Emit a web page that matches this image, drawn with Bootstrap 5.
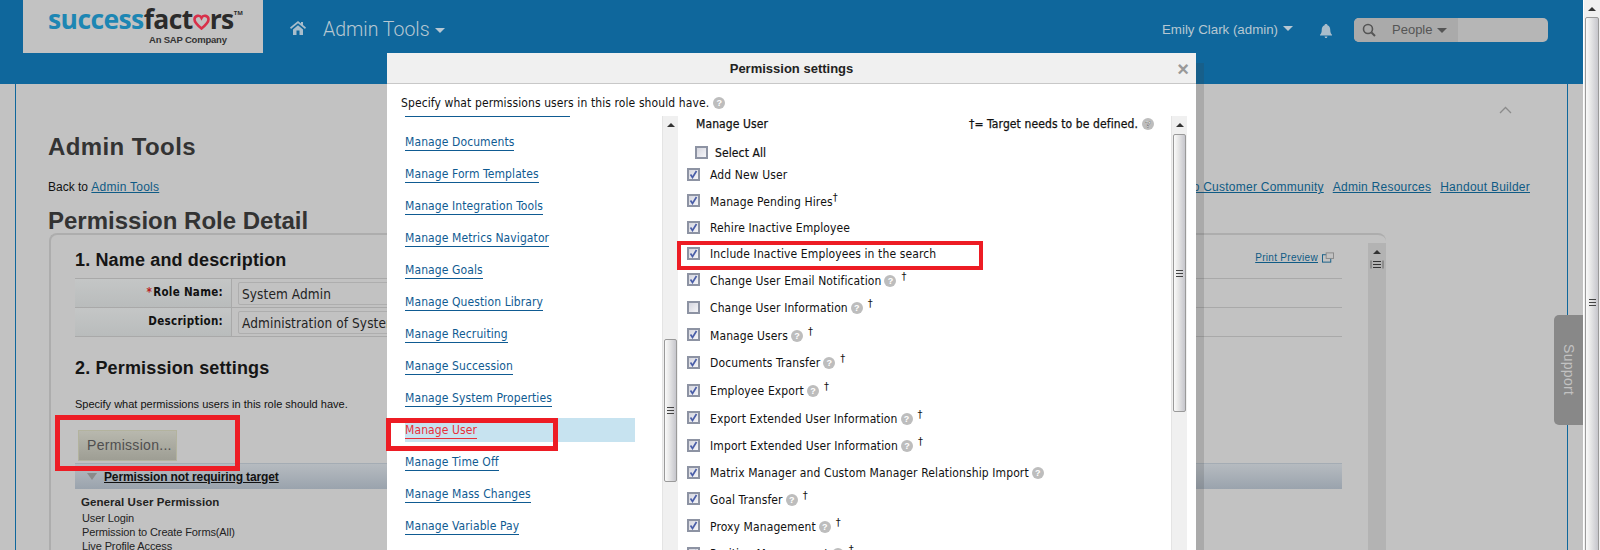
<!DOCTYPE html>
<html lang="en">
<head>
<meta charset="utf-8">
<title>Permission settings</title>
<link href="https://cdn.jsdelivr.net/npm/bootstrap@5.3.0/dist/css/bootstrap.min.css" rel="stylesheet">
<style>
html,body{height:550px;overflow:hidden;background:#c2c2c2;}
body{font-family:"Liberation Sans",Arial,sans-serif;font-size:12px;color:#111;position:relative;}
.shell{height:550px;}
.mainarea{width:1583px;height:550px;overflow:hidden;}
.topbar{height:84px;background:#0f679c;color:#b7c7d2;}
.logobox{width:240px;height:53px;margin-left:23px;background:#c2c2c2;padding:7px 0 0 25px;}
.logotxt{font-family:"Open Sans","Liberation Sans",sans-serif;font-weight:700;font-size:26.5px;line-height:24px;letter-spacing:-.6px;color:#2b2b2b;white-space:nowrap;}
.logotxt b{color:#1d86b3;font-weight:700;}
.logotxt svg{margin:0 0 -1px 0;}
.logotxt sup{font-size:6px;top:-14px;letter-spacing:0;vertical-align:baseline;position:relative;}
.logosub{font-size:9.5px;font-weight:700;letter-spacing:-.2px;line-height:10px;color:#333;margin:4px 0 0 101px;white-space:nowrap;}
.homeic{margin:21px 0 0 27px;}
.admtitle{font-family:"Roboto","Liberation Sans",sans-serif;font-weight:300;font-size:19.5px;line-height:24px;margin:18px 0 0 17px;white-space:nowrap;}
.careti{display:inline-block;border:5px solid transparent;border-top:5px solid #b7c7d2;border-bottom:0;margin-left:5px;vertical-align:3px;}
.usertxt{font-size:13.3px;line-height:20px;margin:20px 0 0 auto;white-space:nowrap;}
.bellic{margin:24px 0 0 26px;}
.searchwrap{width:194px;height:24px;margin:18px 35px 0 21px;background:#b6b6b6;border-radius:5px;overflow:hidden;}
.searchleft{width:104px;background:#aaa;color:#555;font-size:13px;}
.contentwrap{width:1553px;height:466px;margin-left:15px;border:solid #0f679c;border-width:0 1px;padding:0 0 0 32px;position:relative;}
.chevrow{height:41px;padding:22px 55px 0 0;}
.pagetitle{font-size:24px;font-weight:700;line-height:28px;letter-spacing:.4px;color:#333;margin:0;padding-top:8px;height:36px;}
.backrow{height:20px;margin-top:16px;line-height:20px;width:1482px;}
.backrow a{color:#0f5b85;letter-spacing:.25px;}
.backgap{gap:9px;}
.roletitle{font-size:24px;font-weight:700;line-height:28px;letter-spacing:0;color:#333;margin:10px 0 0;height:26px;}
.rolecard{width:1337px;height:317px;margin:0 0 0 1px;border:solid #adadad;border-width:2px 0 0 2px;border-radius:8px 8px 0 0;overflow:hidden;}
.cardinner{width:1317px;padding-left:24px;}
.cardbar{width:18px;background:#b3b3b3;height:330px;margin-top:8px;}
.secrow{margin-top:14px;}
.sec-h{font-size:18px;line-height:22px;font-weight:700;color:#151515;margin:0;letter-spacing:.15px;white-space:nowrap;}
.printwrap{margin:0 34px 6px 0;}
.printlk{font-size:10px;letter-spacing:.3px;color:#0f5b85;}
.formgrid{width:1267px;margin-top:7px;border-top:1px solid #a9a9a9;}
.formrow{height:29px;border-bottom:1px solid #a9a9a9;}
.formlab{width:157px;border-right:1px solid #a9a9a9;background:linear-gradient(#c4c6c6,#b9bcbc);font:700 11.5px/26px "DejaVu Sans Condensed","Noto Sans",sans-serif;text-align:right;padding-right:8px;letter-spacing:.3px;}
.formlab i{color:#b22;font-style:normal;margin-right:1px;}
.formval{padding:3px 0 0 6px;flex:1;}
.faux-inp{height:23px;width:900px;border:1px solid #aeaeae;border-radius:2px;font:13.5px/22px "DejaVu Sans Condensed","Noto Sans",sans-serif;padding-left:3px;letter-spacing:.1px;color:#222;white-space:nowrap;}
.sec-two{margin-top:20px;}
.spectxt{font-size:11px;line-height:16px;margin-top:17px;}
.permbtn{width:99px;height:31px;margin:18px 0 0 3px;border:1px solid #b3b39e;background:linear-gradient(#b8b8ae,#9e9e94);color:#4f4f4f;font-size:14px;line-height:29px;letter-spacing:.3px;border-radius:0;padding:0 0 0 8px;text-align:left;}
.permbar{width:1267px;height:26px;margin-top:2px;background:linear-gradient(#b6bbc0,#9aa3ad);border-top:1px solid #a4acb4;padding-left:11px;font-weight:700;font-size:12px;color:#111;}
.permbar u{margin-left:6px;letter-spacing:-.13px;}
.genhead{font-weight:700;font-size:11.5px;letter-spacing:.07px;margin:6px 0 0 6px;line-height:14px;color:#222;}
.genlist{margin:2px 0 0 7px;line-height:14px;font-size:11px;letter-spacing:-.12px;color:#222;}
.supporttab{position:absolute;right:-16px;top:231px;width:29px;height:110px;background:#888;color:#c2c2c2;border-radius:5px 0 0 5px;writing-mode:vertical-rl;font-size:14px;text-align:center;line-height:29px;letter-spacing:.3px;}
.modalbox{position:absolute;left:387px;top:53px;width:809px;height:497px;background:#fff;box-shadow:8px 10px 0 rgba(60,60,60,.18);font-family:"DejaVu Sans Condensed","Noto Sans",sans-serif;color:#111;}
.modalhead{height:31px;background:#f0f0f0;border-bottom:1px solid #c8c8c8;font:700 13px/32px "Liberation Sans",sans-serif;color:#222;position:relative;}
.modalx{position:absolute;right:7px;top:1px;font:700 20px/30px "Liberation Sans",sans-serif;color:#999;}
.intro{height:32px;padding:11px 0 0 14px;font-size:12px;letter-spacing:.1px;line-height:16px;}
.hq{display:inline-block;width:12px;height:12px;border-radius:50%;background:#bdbdbd;color:#fff;font:700 9px/12px "Liberation Sans",sans-serif;text-align:center;margin-left:4px;vertical-align:1px;letter-spacing:0;}
.panes{height:434px;overflow:hidden;}
.leftpane{width:275px;overflow:hidden;padding-left:18px;}
.navclip{width:165px;height:10px;border-top:1px solid #0f5b92;}
.navitem{height:32px;line-height:32px;}
.navitem a{display:inline-block;line-height:15px;color:#0f5b92;border-bottom:1px solid #0f5b92;text-decoration:none;font-size:12px;white-space:nowrap;letter-spacing:.1px;}
.navitem.cur{background:#c7e3f0;height:24px;margin:4px 0;line-height:24px;width:230px;}
.navitem.cur a{color:#e8303a;border-color:#e8303a;}
.sbtrack{width:16px;background:#f0f0f0;border-left:1px solid #e4e4e4;flex:none;}
.sbup{height:17px;text-align:center;padding-top:7px;}
.sbup i{display:block;width:0;margin:0 auto;border:4px solid transparent;border-bottom:4px solid #333;border-top:0;}
.sbthumb{margin:0 1px;border:1px solid #9a9a9a;border-radius:2px;background:linear-gradient(90deg,#fafafa,#e9e9e9 35%,#c6c6cc);}
.thumbleft{height:143px;margin-top:206px;}
.thumbright{height:278px;margin-top:1px;}
.grip{width:7px;height:7px;background:repeating-linear-gradient(#444 0 1px,transparent 1px 3px);}
.rightpane{width:493px;padding-left:9px;font-size:12px;letter-spacing:.11px;}
.paneh{height:16px;line-height:16px;font-weight:400;-webkit-text-stroke:.25px #111;padding:0 0 0 9px;width:467px;}
.selrow{height:17px;margin-top:12px;padding-left:8px;}
.selrow label{margin-left:7px;-webkit-text-stroke:.2px #111;}
.permrow{white-space:nowrap;}
.permrow label{margin-left:10px;line-height:16px;padding-top:2px;}
.permrow .hq{margin-left:3px;}
.r26{height:26px}.r27{height:27px}.r28{height:28px}
.dg{font-size:11px;margin-left:5px;vertical-align:5px;line-height:0;}
.dg0{margin-left:0;}
.chk{appearance:none;-webkit-appearance:none;display:block;width:13px;height:13px;margin:0;border:2px solid #8d93a3;background:linear-gradient(135deg,#d5d6df,#f5f5f8);flex:none;}
.chk:checked{background:url("data:image/svg+xml,%3Csvg xmlns='http://www.w3.org/2000/svg' viewBox='0 0 9 9'%3E%3Cpath d='M1.5 4.5 3.5 7.5 7.5 1' fill='none' stroke='%234a5ea8' stroke-width='1.7'/%3E%3C/svg%3E") center/9px 9px no-repeat,linear-gradient(135deg,#d5d6df,#f5f5f8);}
.pagebar{width:17px;height:550px;background:#f0f0f0;border-left:1px solid #fff;overflow:hidden;}
.pagethumb{height:590px;}
.pagegrip{margin-top:281px;}
.rbox{position:absolute;border:5px solid #ed1c24;pointer-events:none;}
.rbox1{left:55px;top:415px;width:185px;height:56px;}
.rbox2{left:386px;top:418px;width:172px;height:33px;}
.rbox3{left:677px;top:241px;width:306px;height:29px;border-width:4px;}
</style>
</head>
<body>
<div class="shell d-flex">
  <div class="mainarea">
    <header class="topbar d-flex">
      <div class="logobox">
        <div class="logotxt"><b>success</b>fact<svg width="17" height="16" viewBox="0 0 17 16"><path d="M8.500 14.500C3 10 1.500 8 1.500 5.500A3.700 3.700 0 0 1 8.500 3.800 3.700 3.700 0 0 1 15.500 5.500C15.500 8 14 10 8.500 14.500Z" fill="none" stroke="#d8304a" stroke-width="2.600"/></svg>rs<sup>TM</sup></div>
        <div class="logosub">An SAP Company</div>
      </div>
      <svg class="homeic" width="16" height="14" viewBox="0 0 16 14"><path d="M8 0 0 6.500 1 8 8 2.300 15 8 16 6.500 13 4V1h-2v1.400ZM3 8.500V14h3.500V9.500h3V14H13V8.500L8 4.300Z" fill="#a9bdcb"/></svg>
      <div class="admtitle">Admin Tools<span class="careti"></span></div>
      <div class="usertxt">Emily Clark (admin)<span class="careti"></span></div>
      <svg class="bellic" width="14" height="14" viewBox="0 0 14 14"><path d="M7 0C8 0 8.500.6 8.500 1.300 10.700 2 11.300 4 11.300 6.500c0 2 .7 3.200 1.700 4.200V11.500H1v-.8C2 9.700 2.700 8.500 2.700 6.500 2.700 4 3.300 2 5.500 1.300 5.500.6 6 0 7 0ZM5.500 12.500h3L7.800 14H6.200Z" fill="#a9bdcb"/></svg>
      <div class="searchwrap d-flex">
        <div class="searchleft d-flex align-items-center">
          <svg class="ms-2" width="14" height="14" viewBox="0 0 14 14"><circle cx="6" cy="6" r="4.500" fill="none" stroke="#555" stroke-width="1.600"/><path d="M9.500 9.500 13 13" stroke="#555" stroke-width="2"/></svg>
          <span class="ms-3">People</span><span class="careti" style="border-top-color:#555"></span>
        </div>
      </div>
    </header>
    <main class="contentwrap">
      <div class="chevrow d-flex justify-content-end">
        <svg width="13" height="8" viewBox="0 0 13 8"><path d="M1 7 6.500 1.500 12 7" fill="none" stroke="#8b8b8b" stroke-width="1.300"/></svg>
      </div>
      <h1 class="pagetitle">Admin Tools</h1>
      <div class="backrow d-flex justify-content-between">
        <div>Back to <a href="#">Admin Tools</a></div>
        <div class="d-flex backgap"><a href="#">Go to Customer Community</a><a href="#">Admin Resources</a><a href="#">Handout Builder</a></div>
      </div>
      <h2 class="roletitle">Permission Role Detail</h2>
      <div class="rolecard d-flex">
        <div class="cardinner">
          <div class="d-flex align-items-center justify-content-between secrow">
            <h3 class="sec-h">1. Name and description</h3>
            <div class="d-flex align-items-center printwrap"><a href="#" class="printlk">Print Preview</a>
              <svg class="ms-1" width="12" height="11" viewBox="0 0 13 11"><rect x=".5" y="2.500" width="9" height="8" fill="none" stroke="#0f5b85"/><rect x="4.500" y=".5" width="8" height="6" fill="#c2c2c2" stroke="#888"/></svg>
            </div>
          </div>
          <div class="formgrid">
            <div class="formrow d-flex"><div class="formlab"><i>*</i>Role Name:</div><div class="formval"><div class="faux-inp">System Admin</div></div></div>
            <div class="formrow d-flex"><div class="formlab">Description:</div><div class="formval"><div class="faux-inp">Administration of System</div></div></div>
          </div>
          <h3 class="sec-h sec-two">2. Permission settings</h3>
          <div class="spectxt">Specify what permissions users in this role should have.</div>
          <button type="button" class="btn d-block permbtn">Permission...</button>
          <div class="permbar d-flex align-items-center">
            <svg width="12" height="9" viewBox="0 0 12 9"><path d="M1 1h10L6 8Z" fill="#8a8a8a"/></svg><u>Permission not requiring target</u>
          </div>
          <div class="genhead">General User Permission</div>
          <div class="genlist">User Login<br>Permission to Create Forms(All)<br>Live Profile Access</div>
        </div>
        <div class="cardbar">
          <div class="sbup"><i></i></div>
          <svg class="d-block mx-auto" width="14" height="9" viewBox="0 0 14 9"><path d="M1 .5v8M13 .5v8" stroke="#666" fill="none"/><path d="M3 1.500h8M3 4.500h8M3 7.500h8" stroke="#333"/></svg>
        </div>
      </div>
      <div class="supporttab">Support</div>
    </main>
  </div>
  <div class="pagebar">
    <div class="sbup"><i></i></div>
    <div class="sbthumb pagethumb"><div class="grip mx-auto pagegrip"></div></div>
  </div>
</div>

<section class="modalbox">
  <div class="modalhead text-center">Permission settings<span class="modalx">&#215;</span></div>
  <div class="intro">Specify what permissions users in this role should have.<span class="hq">?</span></div>
  <div class="panes d-flex">
    <nav class="leftpane">
      <div class="navclip"></div>
      <div class="navitem"><a href="#">Manage Documents</a></div>
      <div class="navitem"><a href="#">Manage Form Templates</a></div>
      <div class="navitem"><a href="#">Manage Integration Tools</a></div>
      <div class="navitem"><a href="#">Manage Metrics Navigator</a></div>
      <div class="navitem"><a href="#">Manage Goals</a></div>
      <div class="navitem"><a href="#">Manage Question Library</a></div>
      <div class="navitem"><a href="#">Manage Recruiting</a></div>
      <div class="navitem"><a href="#">Manage Succession</a></div>
      <div class="navitem"><a href="#">Manage System Properties</a></div>
      <div class="navitem cur"><a href="#">Manage User</a></div>
      <div class="navitem"><a href="#">Manage Time Off</a></div>
      <div class="navitem"><a href="#">Manage Mass Changes</a></div>
      <div class="navitem"><a href="#">Manage Variable Pay</a></div>
    </nav>
    <div class="sbtrack">
      <div class="sbup"><i></i></div>
      <div class="sbthumb thumbleft d-flex align-items-center justify-content-center"><div class="grip"></div></div>
    </div>
    <div class="rightpane">
      <div class="paneh d-flex justify-content-between">
        <span>Manage User</span>
        <span>&#8224;= Target needs to be defined.<span class="hq">?</span></span>
      </div>
      <div class="selrow d-flex align-items-center"><input class="chk" type="checkbox" aria-label="Select All"><label>Select All</label></div>
      <div class="permrow r26 d-flex align-items-center"><input class="chk" type="checkbox" checked aria-label="Add New User"><label>Add New User</label></div>
      <div class="permrow r27 d-flex align-items-center"><input class="chk" type="checkbox" checked aria-label="Manage Pending Hires"><label>Manage Pending Hires<span class="dg dg0">&#8224;</span></label></div>
      <div class="permrow r26 d-flex align-items-center"><input class="chk" type="checkbox" checked aria-label="Rehire Inactive Employee"><label>Rehire Inactive Employee</label></div>
      <div class="permrow r26 d-flex align-items-center"><input class="chk" type="checkbox" checked aria-label="Include Inactive Employees in the search"><label>Include Inactive Employees in the search</label></div>
      <div class="permrow r27 d-flex align-items-center"><input class="chk" type="checkbox" checked aria-label="Change User Email Notification"><label>Change User Email Notification<span class="hq">?</span><span class="dg">&#8224;</span></label></div>
      <div class="permrow r28 d-flex align-items-center"><input class="chk" type="checkbox" aria-label="Change User Information"><label>Change User Information<span class="hq">?</span><span class="dg">&#8224;</span></label></div>
      <div class="permrow r27 d-flex align-items-center"><input class="chk" type="checkbox" checked aria-label="Manage Users"><label>Manage Users<span class="hq">?</span><span class="dg">&#8224;</span></label></div>
      <div class="permrow r28 d-flex align-items-center"><input class="chk" type="checkbox" checked aria-label="Documents Transfer"><label>Documents Transfer<span class="hq">?</span><span class="dg">&#8224;</span></label></div>
      <div class="permrow r28 d-flex align-items-center"><input class="chk" type="checkbox" checked aria-label="Employee Export"><label>Employee Export<span class="hq">?</span><span class="dg">&#8224;</span></label></div>
      <div class="permrow r27 d-flex align-items-center"><input class="chk" type="checkbox" checked aria-label="Export Extended User Information"><label>Export Extended User Information<span class="hq">?</span><span class="dg">&#8224;</span></label></div>
      <div class="permrow r28 d-flex align-items-center"><input class="chk" type="checkbox" checked aria-label="Import Extended User Information"><label>Import Extended User Information<span class="hq">?</span><span class="dg">&#8224;</span></label></div>
      <div class="permrow r26 d-flex align-items-center"><input class="chk" type="checkbox" checked aria-label="Matrix Manager and Custom Manager Relationship Import"><label>Matrix Manager and Custom Manager Relationship Import<span class="hq">?</span></label></div>
      <div class="permrow r27 d-flex align-items-center"><input class="chk" type="checkbox" checked aria-label="Goal Transfer"><label>Goal Transfer<span class="hq">?</span><span class="dg">&#8224;</span></label></div>
      <div class="permrow r27 d-flex align-items-center"><input class="chk" type="checkbox" checked aria-label="Proxy Management"><label>Proxy Management<span class="hq">?</span><span class="dg">&#8224;</span></label></div>
      <div class="permrow r28 d-flex align-items-center"><input class="chk" type="checkbox" checked aria-label="Position Management"><label>Position Management<span class="hq">?</span><span class="dg">&#8224;</span></label></div>
    </div>
    <div class="sbtrack">
      <div class="sbup"><i></i></div>
      <div class="sbthumb thumbright d-flex align-items-center justify-content-center"><div class="grip"></div></div>
    </div>
  </div>
</section>

<div class="rbox rbox1"></div>
<div class="rbox rbox2"></div>
<div class="rbox rbox3"></div>
<script src="https://cdn.jsdelivr.net/npm/bootstrap@5.3.0/dist/js/bootstrap.bundle.min.js"></script>
</body>
</html>
